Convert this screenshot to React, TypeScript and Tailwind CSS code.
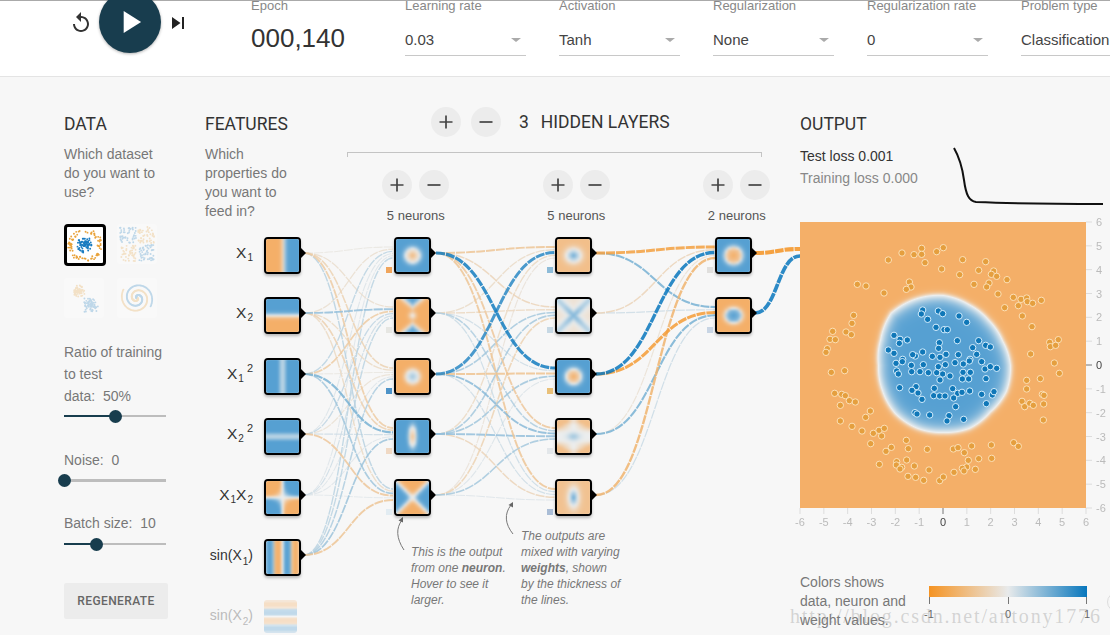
import * as React from "react";

type HeatFn = (x: number, y: number) => number;

const ORANGE: number[] = [244, 175, 104];
const MID: number[] = [236, 238, 238];
const BLUE: number[] = [86, 160, 210];

const mix = (a: number[], b: number[], t: number) =>
  a.map((c, i) => Math.round(c + (b[i] - c) * t));

const heatColor = (v: number) => {
  const t = Math.max(-1, Math.min(1, v));
  return t < 0 ? mix(MID, ORANGE, -t) : mix(MID, BLUE, t);
};

const linkColor = (v: number) => {
  const t = Math.min(1, Math.abs(v));
  const c = v < 0 ? mix([232, 234, 235], [245, 147, 34], t) : mix([232, 234, 235], [8, 119, 189], t);
  return `rgb(${c[0]},${c[1]},${c[2]})`;
};

const radius = (x: number, y: number) => Math.sqrt(x * x + y * y);
const tanh = Math.tanh;

const HeatCanvas: React.FC<{ fn: HeatFn; size: number; className?: string }> = ({ fn, size, className }) => {
  const ref = React.useRef<HTMLCanvasElement>(null);
  React.useEffect(() => {
    const ctx = ref.current?.getContext("2d");
    if (!ctx) return;
    const img = ctx.createImageData(size, size);
    for (let py = 0; py < size; py++) {
      for (let px = 0; px < size; px++) {
        const c = heatColor(fn((px / (size - 1)) * 2 - 1, (py / (size - 1)) * 2 - 1));
        const i = (py * size + px) * 4;
        img.data[i] = c[0];
        img.data[i + 1] = c[1];
        img.data[i + 2] = c[2];
        img.data[i + 3] = 255;
      }
    }
    ctx.putImageData(img, 0, 0);
  }, [fn, size]);
  return <canvas ref={ref} width={size} height={size} className={className} />;
};

// page coordinates of the node rows
const ROWS = [237, 297, 358, 418, 479, 539, 600];
const ORIGIN_X = 205;
const ORIGIN_Y = 76;
const THUMB_RES = 15;

const bump = (r: number, c: number, w: number) => tanh((r - c) * w);

const Sub: React.FC<{ n: number }> = ({ n }) => (
  <sub className="bottom-[-5px] ml-px text-[10px]">{n}</sub>
);
const Sup: React.FC<{ n: number }> = ({ n }) => (
  <sup className="top-[-6px] ml-[3px] text-[11px]">{n}</sup>
);

const featureNodes: { sub: React.ReactNode; fn: HeatFn }[] = [
  { sub: <>X<Sub n={1} /></>, fn: (x) => tanh(x * 7 - 0.5) },
  { sub: <>X<Sub n={2} /></>, fn: (_, y) => tanh(-y * 7) },
  {
    sub: <>X<Sub n={1} /><Sup n={2} /></>,
    fn: (x) => Math.min(1, 0.3 + x * x * 12),
  },
  {
    sub: <>X<Sub n={2} /><Sup n={2} /></>,
    fn: (_, y) => Math.min(1, 0.3 + y * y * 12),
  },
  {
    sub: <>X<Sub n={1} />X<Sub n={2} /></>,
    fn: (x, y) => tanh(-x * y * 14),
  },
  {
    sub: <span className="text-[14px]">sin(X<Sub n={1} />)</span>,
    fn: (x) => tanh(2.4 * Math.sin(6 * x)),
  },
  {
    sub: <span className="text-[14px]">sin(X<Sub n={2} />)</span>,
    fn: (_, y) => tanh(2.4 * Math.sin(-6 * y)),
  },
];

const hiddenOne: HeatFn[] = [
  (x, y) => (radius(x, y * 1.05) < 0.42 ? -0.6 * (1 - radius(x, y) / 0.42) * 1.4 : bump(radius(x, y), 0.42, 6)),
  (x, y) => {
    const edge = tanh(5 * (Math.abs(y) - 0.52 - Math.abs(x) * 0.85));
    return edge * (1 - Math.exp(-radius(x, y) * radius(x, y) * 22));
  },
  (x, y) => (radius(x, y) < 0.38 ? 0.5 * (1 - radius(x, y) / 0.38) : -tanh((radius(x, y) - 0.38) * 6)),
  (x, y) => {
    const r = radius(x * 3.4, y * 1.25);
    return r < 0.7 ? -0.7 * (1 - r / 0.7) : tanh((r - 0.7) * 3);
  },
  (x, y) => tanh(5 * (Math.abs(x) - Math.abs(y))) * (1 - Math.exp(-radius(x, y) * radius(x, y) * 20)),
];

const hiddenTwo: HeatFn[] = [
  (x, y) => {
    const r = radius(x, y * 1.1);
    return r < 0.42 ? 0.85 * (1 - r / 0.42) : -0.75 * tanh((r - 0.42) * 4);
  },
  (x, y) => {
    const d = Math.abs(Math.abs(x) - Math.abs(y));
    const c = Math.exp(-radius(x, y) * radius(x, y) * 3);
    return 0.75 * Math.exp(-d * d * 14) * (0.55 + 0.45 * c) - 0.22 * d;
  },
  (x, y) => (radius(x, y) < 0.36 ? -1 + radius(x, y) * 1.6 : bump(radius(x, y), 0.44, 6)),
  (x, y) => {
    const c = Math.exp(-(x * x * 8 + y * y * 22));
    const corner = Math.max(0, Math.abs(y) - 0.25) * Math.max(0, Math.abs(x) - 0.05);
    return 0.5 * c - Math.min(0.75, corner * 2.4 + (y * y > 0.7 ? 0.2 : 0));
  },
  (x, y) => {
    const r = radius(x * 2.2, y * 1.15);
    return r < 0.6 ? 0.9 * (1 - r / 0.6) : -0.7 * tanh((r - 0.6) * 2.2);
  },
];

const hiddenThree: HeatFn[] = [
  (x, y) => {
    const r = radius(x, y);
    return r < 0.42 ? -1 + r * 0.9 : bump(r, 0.5, 6);
  },
  (x, y) => {
    const r = radius(x, y * 1.15);
    return r < 0.4 ? 1 - r * 0.8 : -tanh((r - 0.5) * 6);
  },
];

// weights, read off the link colours: rows are sources, columns are targets
const weightsOne = [
  [-0.05, -0.15, -0.28, -0.36, 0.22],
  [-0.14, 0.38, -0.2, -0.3, -0.2],
  [0.2, -0.36, -0.05, 0.5, 0.32],
  [0.06, 0.18, -0.12, 0.12, -0.4],
  [0.05, 0.12, 0.05, 0.05, 0.03],
  [0.2, 0.2, 0.26, 0.34, -0.42],
];
const weightsTwo = [
  [-0.42, -0.25, 0.95, -0.4, -0.42],
  [-0.18, -0.22, 0.12, 0.26, 0.14],
  [0.85, 0.3, -0.45, 0.42, 0.12],
  [-0.2, 0.3, 0.32, 0.38, -0.25],
  [-0.1, -0.28, 0.06, 0.3, 0.05],
];
const weightsThree = [
  [-0.85, 0.5],
  [-0.25, 0.12],
  [1, -0.9],
  [-0.12, 0.5],
  [-0.62, 0.14],
];

const curve = (sx: number, sy: number, tx: number, ty: number) => {
  const mx = (sx + tx) / 2;
  return `M${sx} ${sy}C${mx} ${sy} ${mx} ${ty} ${tx} ${ty}`;
};

const Link: React.FC<{ d: string; v: number }> = ({ d, v }) => (
  <path
    d={d}
    fill="none"
    stroke={linkColor(v)}
    strokeOpacity={0.85}
    strokeWidth={0.9 + Math.abs(v) * 2.4}
    strokeDasharray="9 1"
  />
);

const LinkSet: React.FC<{ weights: number[][]; sx: number; tx: number }> = ({ weights, sx, tx }) => {
  const step = 11 / (weights.length - 1);
  const items: { d: string; v: number }[] = [];
  weights.forEach((row, i) =>
    row.forEach((v, j) => {
      items.push({ d: curve(sx, ROWS[i] + 16, tx, ROWS[j] + 10 + i * step), v });
    })
  );
  items.sort((a, b) => Math.abs(a.v) - Math.abs(b.v));
  return (
    <>
      {items.map((it, i) => (
        <Link key={i} d={it.d} v={it.v} />
      ))}
    </>
  );
};

const Node: React.FC<{ left: number; top: number; fn: HeatFn; bias?: string }> = ({ left, top, fn, bias }) => (
  <div
    className="absolute h-[37px] w-[37px] rounded-[4px] border-2 border-black bg-white shadow-[0_2px_3px_rgba(0,0,0,0.25)]"
    style={{ left: left - ORIGIN_X, top: top - ORIGIN_Y }}
  >
    <div className="h-[33px] w-[33px] overflow-hidden rounded-[2px]">
      <HeatCanvas fn={fn} size={THUMB_RES} className="h-[33px] w-[33px] scale-[1.08] blur-[1px]" />
    </div>
    <div className="absolute -right-[7px] top-[9px] h-0 w-0 border-y-[5px] border-l-[5px] border-y-transparent border-l-black" />
    {bias && (
      <div
        className="absolute -left-[10px] top-[28px] h-[6px] w-[6px]"
        style={{ backgroundColor: bias }}
      />
    )}
  </div>
);

const RoundButton: React.FC<{ label: string }> = ({ label }) => (
  <button className="flex h-[30px] w-[30px] shrink-0 items-center justify-center rounded-full bg-[#ececec] text-[#444]">
    <svg width="16" height="16" viewBox="0 0 16 16" fill="none" stroke="currentColor" strokeWidth="1.7">
      <path d={label === "+" ? "M1.5 8h13M8 1.5v13" : "M1.5 8h13"} />
    </svg>
  </button>
);

const SELECTS = [
  ["Learning rate", "0.03"],
  ["Activation", "Tanh"],
  ["Regularization", "None"],
  ["Regularization rate", "0"],
  ["Problem type", "Classification"],
];

const Header: React.FC = () => (
  <header className="flex h-[77px] shrink-0 items-start border-t border-b border-t-[#aaaaaa] border-b-[#e4e4e4] bg-white pl-[69px]">
    <svg width="24" height="24" viewBox="0 0 24 24" className="mt-[10px] shrink-0 text-[#333]" fill="currentColor">
      <path d="M12 5V1L7 6l5 5V7c3.31 0 6 2.69 6 6s-2.69 6-6 6-6-2.69-6-6H4c0 4.42 3.58 8 8 8s8-3.58 8-8-3.58-8-8-8z" />
    </svg>
    <button className="-mt-[10px] ml-[6px] flex h-[62px] w-[62px] shrink-0 items-center justify-center rounded-full bg-[#183d4e] shadow-[0_1px_3px_rgba(0,0,0,0.3)]">
      <svg width="38" height="38" viewBox="0 0 24 24" fill="#ffffff">
        <path d="M8 5v14l11-7z" />
      </svg>
    </button>
    <svg width="24" height="24" viewBox="0 0 24 24" className="ml-[5px] mt-[10px] shrink-0 text-[#222]" fill="currentColor">
      <path d="M6 18l8.5-6L6 6v12zM16 6v12h2V6h-2z" />
    </svg>
    <div className="-mt-[3px] ml-[61px] w-[154px] shrink-0">
      <div className="text-[13px] leading-[16px] text-[#888]">Epoch</div>
      <div className="mt-[8px] text-[26px] leading-[32px] text-[#333]">000,140</div>
    </div>
    <div className="flex gap-[33px]">
      {SELECTS.map(([label, value]) => (
        <div key={label} className="-mt-[3px] w-[121px] shrink-0">
          <div className="whitespace-nowrap text-[13px] leading-[16px] text-[#888]">{label}</div>
          <div className="mt-[16px] flex h-[26px] items-start justify-between border-b border-[#c8c8c8] pr-[5px]">
            <span className="text-[15px] leading-[20px] text-[#444]">{value}</span>
            <span className="mt-[8px] h-0 w-0 border-x-[5px] border-t-[4px] border-x-transparent border-t-[#aaa]" />
          </div>
        </div>
      ))}
    </div>
  </header>
);

const seeded = (seed: number) => {
  let s = seed;
  return () => {
    s = (s * 16807) % 2147483647;
    return (s - 1) / 2147483646;
  };
};

type Dot = { x: number; y: number; c: string };

const DS_ORANGE = "#e9a33b";
const DS_BLUE = "#1a7cc0";

const circleSet = (): Dot[] => {
  const r = seeded(11);
  const out: Dot[] = [];
  for (let i = 0; i < 80; i++) {
    const a = r() * Math.PI * 2;
    const d = r() * 8;
    out.push({ x: 18 + Math.cos(a) * d, y: 18 + Math.sin(a) * d, c: DS_BLUE });
    const b = r() * Math.PI * 2;
    const e = 12.5 + r() * 4.5;
    out.push({ x: 18 + Math.cos(b) * e, y: 18 + Math.sin(b) * e, c: DS_ORANGE });
  }
  return out;
};

const xorSet = (): Dot[] => {
  const r = seeded(23);
  const out: Dot[] = [];
  for (let i = 0; i < 220; i++) {
    const x = 3 + r() * 34;
    const y = 3 + r() * 34;
    if (Math.abs(x - 20) < 1 || Math.abs(y - 20) < 1) continue;
    out.push({ x, y, c: (x - 20) * (y - 20) > 0 ? DS_BLUE : DS_ORANGE });
  }
  return out;
};

const gaussSet = (): Dot[] => {
  const r = seeded(37);
  const out: Dot[] = [];
  for (let i = 0; i < 70; i++) {
    out.push({ x: 15 + (r() + r() - 1) * 6, y: 13 + (r() + r() - 1) * 6, c: DS_ORANGE });
    out.push({ x: 26 + (r() + r() - 1) * 8, y: 27 + (r() + r() - 1) * 8, c: DS_BLUE });
  }
  return out;
};

const spiralSet = (): Dot[] => {
  const out: Dot[] = [];
  for (let i = 0; i < 130; i++) {
    const t = (i / 130) * 3.2 * Math.PI;
    const d = 1.6 * t;
    out.push({ x: 20 + Math.cos(t) * d, y: 20 + Math.sin(t) * d, c: DS_ORANGE });
    out.push({ x: 20 - Math.cos(t) * d, y: 20 - Math.sin(t) * d, c: DS_BLUE });
  }
  return out;
};

const DatasetThumb: React.FC<{ dots: Dot[]; active?: boolean }> = ({ dots, active }) => (
  <div
    className={
      active
        ? "h-[42px] w-[42px] rounded-[4px] border-[3px] border-black bg-white"
        : "h-[40px] w-[40px] rounded-[3px] bg-white opacity-25"
    }
  >
    <svg viewBox={active ? "0 0 36 36" : "0 0 40 40"} className="h-full w-full">
      {dots.map((d, i) => (
        <circle key={i} cx={d.x} cy={d.y} r={0.95} fill={d.c} />
      ))}
    </svg>
  </div>
);

const Slider: React.FC<{ at: number; thick?: boolean }> = ({ at, thick }) => (
  <div className="relative flex h-[18px] w-[102px] items-center">
    <div className={"w-full bg-[#bdbdbd] " + (thick ? "h-[3px]" : "h-[2px]")}>
      <div className="h-full bg-[#183d4e]" style={{ width: at }} />
    </div>
    <div
      className="absolute top-[2.5px] h-[13px] w-[13px] rounded-full bg-[#183d4e]"
      style={{ left: at - 6.5 }}
    />
  </div>
);

const DataColumn: React.FC = () => {
  const sets = React.useMemo(
    () => ({ circle: circleSet(), xor: xorSet(), gauss: gaussSet(), spiral: spiralSet() }),
    []
  );
  return (
    <section className="ml-[64px] w-[104px] shrink-0 text-[14px] text-[#777]">
      <h2 className="pt-px font-[Roboto] text-[17.5px] leading-[24px] text-[#333]">DATA</h2>
      <p className="mt-[9px] leading-[19px]">
        Which dataset
        <br />
        do you want to
        <br />
        use?
      </p>
      <div className="mt-[22px] grid h-[94px] grid-cols-[42px_40px] content-start gap-x-[11px] gap-y-[12px]">
        <DatasetThumb dots={sets.circle} active />
        <DatasetThumb dots={sets.xor} />
        <DatasetThumb dots={sets.gauss} />
        <DatasetThumb dots={sets.spiral} />
      </div>
      <p className="mt-[23px] leading-[22px]">
        Ratio of training
        <br />
        to test
        <br />
        data:&nbsp; 50%
      </p>
      <Slider at={51} />
      <p className="mt-[24px] leading-[22px]">Noise:&nbsp; 0</p>
      <Slider at={0} thick />
      <p className="mt-[23px] leading-[22px]">Batch size:&nbsp; 10</p>
      <div className="mt-px">
        <Slider at={32} />
      </div>
      <button className="mt-[30px] h-[36px] w-[104px] rounded-[2px] bg-[#ececec] font-[Roboto] text-[12px] font-medium tracking-[0.4px] text-[#666]">
        REGENERATE
      </button>
    </section>
  );
};

const LAYER_LABELS = ["5 neurons", "5 neurons", "2 neurons"];
const BIAS_ONE = ["#f0a55c", "#e6e6e2", "#4d93c8", "#f0d9c4", "#e2ecf2"];
const BIAS_TWO = ["#8dbbd8", "#c6d8e4", "#e9c078", "#e3e7ea", "#aabdd6"];
const BIAS_THREE = ["#e0dfdd", "#c8d5e4"];

const NetworkColumn: React.FC = () => (
  <section className="relative ml-[37px] flex h-[559px] w-[595px] shrink-0 items-start">
    <svg
      className="absolute left-0 top-[-35px] h-[559px] w-[595px]"
      viewBox={`${ORIGIN_X} ${ORIGIN_Y} 595 559`}
    >
      <LinkSet weights={weightsOne} sx={304} tx={393} />
      <LinkSet weights={weightsTwo} sx={436} tx={555} />
      <LinkSet weights={weightsThree} sx={596} tx={715} />
      <Link d={curve(755, 253, 800, 249)} v={-1.3} />
      <Link d={curve(755, 313, 800, 256)} v={1.15} />
      <path d="M404 550C396 538 396 528 402 520" fill="none" stroke="#777" strokeWidth="1" />
      <path d="M403 517l-4.5 3.5 4.5 2z" fill="#666" />
      <path d="M513 534C505 524 504 514 511 505" fill="none" stroke="#777" strokeWidth="1" />
      <path d="M513 502l-4.5 3 4.500 2.500z" fill="#666" />
    </svg>

    <div className="relative w-[142px] shrink-0 text-[14px] text-[#777]">
      <h2 className="pt-px font-[Roboto] text-[17.5px] leading-[24px] text-[#333]">FEATURES</h2>
      <p className="mt-[9px] leading-[19px]">
        Which
        <br />
        properties do
        <br />
        you want to
        <br />
        feed in?
      </p>
    </div>

    <div className="relative w-[415px] shrink-0">
      <div className="-mt-[4px] flex h-[30px] items-center pl-[84px]">
        <RoundButton label="+" />
        <div className="ml-[10px]">
          <RoundButton label="-" />
        </div>
        <span className="ml-[18px] font-[Roboto] text-[17.5px] text-[#333]">3</span>
        <span className="ml-[12px] font-[Roboto] text-[17.5px] text-[#333]">HIDDEN LAYERS</span>
      </div>
      <div className="mt-[15px] h-[5px] border-x border-t border-[#c4c4c4]" />
      <div className="mt-[13px] flex gap-[93px] pl-[35px]">
        {LAYER_LABELS.map((label, i) => (
          <div key={i} className="flex w-[67.500px] shrink-0 flex-col items-center">
            <div className="flex gap-[7px]">
              <RoundButton label="+" />
              <RoundButton label="-" />
            </div>
            <span className="mt-[8px] whitespace-nowrap text-[13px] leading-[16px] text-[#555]">{label}</span>
          </div>
        ))}
      </div>
    </div>

    {/* the nodes are a diagram: they sit at their own coordinates */}
    <div className="absolute left-0 top-[-35px]">
      {featureNodes.map((f, i) =>
        i < 6 ? (
          <React.Fragment key={i}>
            <div
              className="absolute flex h-[37px] w-[48px] items-center justify-end whitespace-nowrap pb-[5px] text-[15.5px] text-[#333]"
              style={{ top: ROWS[i] - ORIGIN_Y }}
            >
              {f.sub}
            </div>
            <Node left={264} top={ROWS[i]} fn={f.fn} />
          </React.Fragment>
        ) : (
          <React.Fragment key={i}>
            <div
              className="absolute flex h-[33px] w-[48px] items-center justify-end whitespace-nowrap text-[#bbb]"
              style={{ top: ROWS[i] - ORIGIN_Y - 1 }}
            >
              {f.sub}
            </div>
            <div className="absolute opacity-35" style={{ left: 59, top: ROWS[i] - ORIGIN_Y }}>
              <HeatCanvas fn={f.fn} size={THUMB_RES} className="h-[33px] w-[33px] rounded-[3px]" />
            </div>
          </React.Fragment>
        )
      )}
      {hiddenOne.map((fn, i) => (
        <Node key={i} left={394} top={ROWS[i]} fn={fn} bias={BIAS_ONE[i]} />
      ))}
      {hiddenTwo.map((fn, i) => (
        <Node key={i} left={555} top={ROWS[i]} fn={fn} bias={BIAS_TWO[i]} />
      ))}
      {hiddenThree.map((fn, i) => (
        <Node key={i} left={715} top={ROWS[i]} fn={fn} bias={BIAS_THREE[i]} />
      ))}
      <p className="absolute left-[206px] top-[468px] w-[105px] whitespace-nowrap text-[12px] italic leading-[16px] text-[#777]">
        This is the output
        <br />
        from one <b>neuron</b>.
        <br />
        Hover to see it
        <br />
        larger.
      </p>
      <p className="absolute left-[316px] top-[452px] w-[110px] whitespace-nowrap text-[12px] italic leading-[16px] text-[#777]">
        The outputs are
        <br />
        mixed with varying
        <br />
        <b>weights</b>, shown
        <br />
        by the thickness of
        <br />
        the lines.
      </p>
    </div>
  </section>
);

// outline of the blob around its centre, one radius per 22.5 degrees (screen angle)
const BLOB = [67, 68, 66, 68, 67, 68, 68, 66, 65, 68, 74, 72, 70, 66, 64, 64];
const blobRadius = (theta: number) => {
  const t = ((theta + Math.PI * 2) % (Math.PI * 2)) / (Math.PI / 8);
  const i = Math.floor(t);
  const f = t - i;
  return BLOB[i % 16] + (BLOB[(i + 1) % 16] - BLOB[i % 16]) * f;
};

const outputFn: HeatFn = (x, y) => {
  const px = ((x + 1) / 2) * 285 + 800 - 943;
  const py = ((y + 1) / 2) * 285 + 222 - 365;
  const d = blobRadius(Math.atan2(py, px)) - radius(px, py);
  return d > 0 ? tanh(d / 9) : tanh(d / 3.5);
};

// points traced off the reference, page x = 790 + a / 3, page y = base + b / 3
const orangeTop = [
  [295, 480], [336, 459], [372, 464], [395, 445], [395, 463], [405, 488], [440, 455], [460, 443], [455, 507],
  [518, 479], [509, 524], [587, 485], [566, 511], [611, 513], [604, 523], [620, 529], [651, 539], [552, 553],
  [597, 549], [590, 561], [624, 582], [670, 592], [693, 598], [710, 594], [712, 605], [728, 610], [754, 601],
  [685, 617], [644, 623], [697, 648], [726, 680], [202, 553], [228, 558], [282, 579], [358, 546], [363, 561],
  [349, 568], [191, 646], [186, 670], [168, 696], [184, 704], [128, 694], [120, 718], [136, 719], [112, 746],
  [108, 757], [779, 727], [805, 719], [781, 740], [797, 736], [722, 762],
];
const orangeBottom = [
  [124, 37], [164, 32], [134, 100], [155, 103], [166, 107], [178, 122], [196, 126], [151, 136], [241, 153],
  [227, 172], [151, 183], [186, 199], [216, 213], [250, 220], [267, 211], [283, 205], [275, 228], [242, 251],
  [304, 262], [288, 274], [349, 241], [355, 266], [412, 268], [268, 313], [320, 305], [319, 315], [335, 322],
  [330, 327], [350, 300], [373, 318], [417, 330], [354, 349], [377, 352], [401, 361], [449, 362], [460, 351],
  [492, 337], [490, 267], [504, 263], [523, 278], [545, 258], [604, 255], [605, 295], [566, 296], [535, 301],
  [530, 321], [517, 325], [522, 333], [556, 328], [671, 248], [685, 259], [793, 9], [808, 40], [710, 61],
  [751, 56], [710, 87], [757, 103], [762, 106], [761, 132], [760, 180], [696, 124], [704, 140], [719, 130],
  [730, 136],
];
const blueTop = [
  [398, 630], [394, 642], [413, 658], [445, 633], [458, 641], [507, 648], [530, 667], [438, 682], [462, 689],
  [472, 689], [502, 722], [566, 722], [312, 706], [330, 718], [352, 720], [328, 730], [448, 728], [446, 745],
  [398, 756], [295, 750], [312, 760], [548, 743], [587, 736], [601, 741], [560, 763], [376, 768], [368, 764],
  [338, 778], [427, 769], [450, 772], [468, 763], [505, 764], [540, 778],
];
const blueBottom = [
  [318, 10], [337, 5], [364, 16], [400, 14], [365, 35], [320, 33], [325, 42], [390, 35], [415, 38], [440, 38],
  [445, 20], [466, 14], [495, 8], [520, 12], [538, 3], [575, 5], [585, 27], [601, 20], [620, 25], [519, 37],
  [541, 37], [517, 57], [536, 57], [588, 56], [458, 42], [480, 48], [450, 60], [329, 83], [378, 80], [366, 91],
  [384, 99], [396, 118], [433, 85], [431, 107], [449, 108], [465, 108], [488, 86], [503, 100], [516, 97],
  [539, 93], [491, 114], [575, 103], [607, 105], [612, 95], [589, 131], [497, 140], [375, 158], [381, 162],
  [419, 165], [477, 167], [471, 183], [521, 178],
];

const toPlot = (pts: number[][], base: number) =>
  pts.map(([a, b]) => [790 + a / 3 - 800, base + b / 3 - 222]);

const AXIS = [6, 5, 4, 3, 2, 1, 0, -1, -2, -3, -4, -5, -6];

const Plot: React.FC = () => (
  <div className="relative h-[286px] w-[286px]">
    <HeatCanvas fn={outputFn} size={286} className="h-[286px] w-[286px]" />
    <svg className="absolute left-0 top-0 overflow-visible" width="286" height="286">
      {[...toPlot(orangeTop, 100), ...toPlot(orangeBottom, 360)].map(([x, y], i) => (
        <circle key={i} cx={x} cy={y} r={3.2} fill="#e59f3e" stroke="#fbdfb6" strokeWidth={1} />
      ))}
      {[...toPlot(blueTop, 100), ...toPlot(blueBottom, 360)].map(([x, y], i) => (
        <circle key={i} cx={x} cy={y} r={3.2} fill="#0f77b8" stroke="#d3ecfb" strokeWidth={1} />
      ))}
      {AXIS.map((n, i) => {
        const p = (i * 286) / 12;
        return (
          <g key={n} fontSize="11" fontFamily="Liberation Sans, sans-serif">
            <line x1={286} x2={292} y1={p} y2={p} stroke={n === 0 ? "#777" : "#ddd"} />
            <text x={296} y={p + 4} fill={n === 0 ? "#444" : "#bbb"}>
              {n}
            </text>
            <line x1={286 - p} x2={286 - p} y1={286} y2={292} stroke={n === 0 ? "#777" : "#ddd"} />
            <text x={286 - p} y={304} textAnchor="middle" fill={n === 0 ? "#444" : "#bbb"}>
              {n}
            </text>
          </g>
        );
      })}
    </svg>
  </div>
);

const OutputColumn: React.FC = () => (
  <section className="w-[310px] shrink-0">
    <h2 className="pt-px font-[Roboto] text-[17.5px] leading-[24px] text-[#333]">OUTPUT</h2>
    <div className="mt-[9px] flex h-[77px] items-start">
      <div className="w-[150px] text-[14px] leading-[22px]">
        <div className="text-[#333]">Test loss 0.001</div>
        <div className="text-[#888]">Training loss 0.000</div>
      </div>
      <svg width="160" height="77" className="shrink-0">
        <path
          d="M4 3C8 10 12 20 14 35C16 50 19 56 26 57C50 58 100 59 153 59"
          fill="none"
          stroke="#111"
          strokeWidth="2"
        />
      </svg>
    </div>
    <Plot />
    <div className="mt-[65px] flex items-start">
      <p className="w-[129px] shrink-0 whitespace-nowrap text-[14px] leading-[19px] text-[#777]">
        Colors shows
        <br />
        data, neuron and
        <br />
        weight values.
      </p>
      <svg width="165" height="40" className="mt-[13px] shrink-0 overflow-visible">
        <defs>
          <linearGradient id="legend">
            <stop offset="0" stopColor="#f59322" />
            <stop offset="0.5" stopColor="#e8eaeb" />
            <stop offset="1" stopColor="#0877bd" />
          </linearGradient>
        </defs>
        <rect x="0" y="0" width="158" height="11" fill="url(#legend)" />
        <path d="M0.5 11v7M79.500 11v7M157.500 11v7" stroke="#777" fill="none" />
        <g fontSize="11" fontFamily="Liberation Sans, sans-serif" fill="#666" textAnchor="middle">
          <text x="0" y="32">-1</text>
          <text x="79" y="32">0</text>
          <text x="158" y="32">1</text>
        </g>
      </svg>
    </div>
  </section>
);

const App: React.FC = () => (
  <div className="relative flex h-[635px] w-[1110px] flex-col overflow-hidden bg-[#f7f7f7] font-['Liberation_Sans',sans-serif]">
    <Header />
    <main className="flex items-start pt-[34px]">
      <DataColumn />
      <NetworkColumn />
      <OutputColumn />
    </main>
    {/* blog watermark burnt into the screenshot */}
    <div className="pointer-events-none absolute left-[790px] top-[604px] whitespace-nowrap font-['Liberation_Serif',serif] text-[20px] leading-[24px] tracking-[1.85px] text-[#8f8f8f]/35">
      http://blog.csdn.net/antony1776
    </div>
    <div className="absolute left-[1107px] top-[592px] h-[20px] w-[20px] rounded-full border border-[#ddd]" />
  </div>
);

export default App;
